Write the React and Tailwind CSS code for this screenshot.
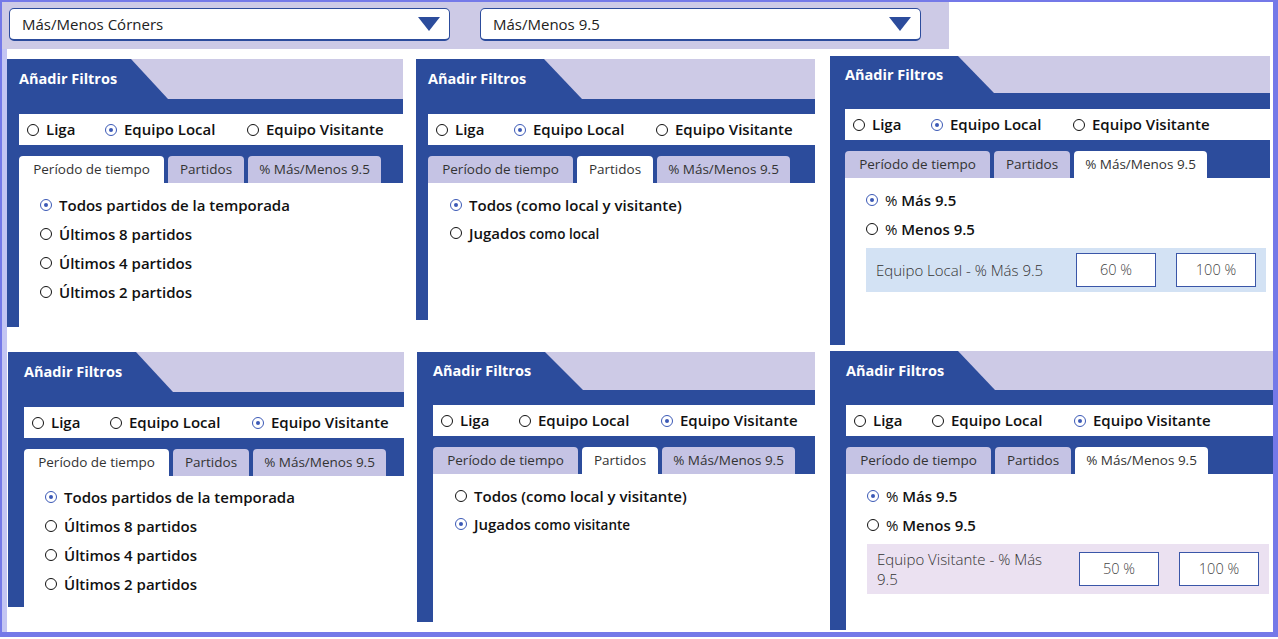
import React from "react";

const BLUE = "#2c4c9c";

function Radio({ on }) {
  return on ? (
    <span className="w-[12px] h-[12px] rounded-full border-[1.5px] border-[#3b59b6] flex items-center justify-center shrink-0">
      <span className="w-[4px] h-[4px] rounded-full bg-[#3b59b6]" />
    </span>
  ) : (
    <span className="w-[12px] h-[12px] rounded-full border-[1.5px] border-[#111] shrink-0" />
  );
}

function Header({ hCls, blueCls, padCls }) {
  return (
    <div className={`${hCls} bg-[#cdcae6] flex shrink-0`}>
      <div className={`${blueCls} h-full bg-[#2c4c9c] flex items-center ${padCls}`}>
        <span className="text-white font-bold text-[14.5px]">Añadir Filtros</span>
      </div>
    </div>
  );
}

function ScopeRow({ sel }) {
  const items = ["Liga", "Equipo Local", "Equipo Visitante"];
  const widths = ["w-[78px]", "w-[142px]", ""];
  return (
    <div className="h-[31px] bg-white flex items-center pl-[8px] shrink-0">
      {items.map((t, i) => (
        <div key={t} className={`${widths[i]} flex items-center gap-[7px]`}>
          <Radio on={sel === i} />
          <span className="text-[15px] font-semibold text-[#111]">{t}</span>
        </div>
      ))}
    </div>
  );
}

function Tabs({ active }) {
  const tabs = [
    ["Período de tiempo", "w-[145px]"],
    ["Partidos", "w-[76px]"],
    ["% Más/Menos 9.5", "w-[133px]"],
  ];
  return (
    <div className="mt-[11px] h-[27px] flex items-end gap-[4px] shrink-0">
      {tabs.map(([t, w], i) => (
        <div
          key={t}
          className={`${w} h-[27px] rounded-t-[4px] flex items-center justify-center text-[13.5px] text-[#333] ${
            active === i ? "bg-white" : "bg-[#c5c3e4]"
          }`}
        >
          {t}
        </div>
      ))}
    </div>
  );
}

function Item({ on, children }) {
  return (
    <div className="h-[20px] flex items-center gap-[7px]">
      <Radio on={on} />
      <span className="text-[15px] text-[#111] whitespace-nowrap">{children}</span>
    </div>
  );
}

function Periodo({ ptCls }) {
  return (
    <div className={`flex flex-col gap-[9px] pl-[21px] ${ptCls}`}>
      <Item on>
        <b className="font-semibold">Todos partidos de la temporada</b>
      </Item>
      <Item>
        <b className="font-semibold">Últimos 8 partidos</b>
      </Item>
      <Item>
        <b className="font-semibold">Últimos 4 partidos</b>
      </Item>
      <Item>
        <b className="font-semibold">Últimos 2 partidos</b>
      </Item>
    </div>
  );
}

function Partidos({ which }) {
  return (
    <div className="flex flex-col gap-[8px] pl-[22px] pt-[12px]">
      <Item on={false === which}>
        <b className="font-semibold">Todos (como local y visitante)</b>
      </Item>
      <Item on={which}>
        <b className="font-semibold">Jugados</b>
        <span className="text-[13.5px] font-semibold"> como {which ? "visitante" : "local"}</span>
      </Item>
    </div>
  );
}

function Pct({ label, v1, boxCls }) {
  return (
    <div className="flex flex-col pt-[12px] pl-[21px] pr-[4px]">
      <div className="flex flex-col gap-[9px]">
        <Item on>
          <span className="font-normal">% </span>
          <b className="font-semibold">Más 9.5</b>
        </Item>
        <Item>
          <span className="font-normal">% </span>
          <b className="font-semibold">Menos 9.5</b>
        </Item>
      </div>
      <div className={`mt-[9px] flex items-center pl-[10px] pr-[10px] gap-[20px] ${boxCls}`}>
        <div className="flex-1 text-[15px] font-light text-[#333] leading-[20px]">{label}</div>
        <div className="w-[80px] h-[34px] bg-white border border-[#3a56a8] flex items-center justify-center text-[14.5px] font-light text-[#444]">
          {v1}
        </div>
        <div className="w-[80px] h-[34px] bg-white border border-[#3a56a8] flex items-center justify-center text-[14.5px] font-light text-[#444]">
          100 %
        </div>
      </div>
    </div>
  );
}

function Panel({ outer, hCls, blueCls, padCls, bandCls, sel, tab, children }) {
  return (
    <div className={`${outer} bg-[#2c4c9c] flex flex-col shrink-0`}>
      <Header hCls={hCls} blueCls={blueCls} padCls={padCls} />
      <div className={`flex-1 flex flex-col ${padCls} ${bandCls}`}>
        <ScopeRow sel={sel} />
        <Tabs active={tab} />
        <div className="flex-1 bg-white">{children}</div>
      </div>
    </div>
  );
}

function Dropdown({ text }) {
  return (
    <div className="w-[441px] h-[33px] bg-white border border-[#2c4c9c] border-b-2 rounded-[5px] flex items-center justify-between pl-[12px] pr-[9px]">
      <span className="text-[15px] text-[#222]">{text}</span>
      <svg width="22" height="14" viewBox="0 0 22 14">
        <path d="M0 0 L22 0 L11 14 Z" fill={BLUE} />
      </svg>
    </div>
  );
}

export default function App() {
  return (
    <div className="w-[1278px] h-[639px] bg-white font-['Open_Sans','Noto_Sans',sans-serif]">
      <div className="h-[637px] border-l-[2px] border-t-[2px] border-r-[5px] border-b-[5px] border-[#7479e8] shadow-[inset_5px_0_0_#c3c5f3] flex flex-col">
        <div className="w-[947px] h-[47px] bg-[#cdcae6] flex items-start pt-[6px] pl-[7px] gap-[30px] shrink-0">
          <Dropdown text="Más/Menos Córners" />
          <Dropdown text="Más/Menos 9.5" />
        </div>

        <div className="h-[300px] flex items-start shrink-0">
          <Panel
            outer="ml-[5px] mt-[10px] w-[396px] h-[268px]"
            hCls="h-[40px]"
            blueCls="w-[161px] [clip-path:polygon(0_0,124px_0,100%_100%,0_100%)]"
            padCls="pl-[12px]"
            bandCls="pt-[15px]"
            sel={1}
            tab={0}
          >
            <Periodo ptCls="pt-[12px]" />
          </Panel>
          <Panel
            outer="ml-[13px] mt-[10px] w-[399px] h-[261px]"
            hCls="h-[40px]"
            blueCls="w-[166px] [clip-path:polygon(0_0,128px_0,100%_100%,0_100%)]"
            padCls="pl-[12px]"
            bandCls="pt-[15px]"
            sel={1}
            tab={1}
          >
            <Partidos which={false} />
          </Panel>
          <Panel
            outer="ml-[15px] mt-[7px] w-[440px] h-[289px]"
            hCls="h-[37px]"
            blueCls="w-[164px] [clip-path:polygon(0_0,128px_0,100%_100%,0_100%)]"
            padCls="pl-[15px]"
            bandCls="pt-[16px]"
            sel={1}
            tab={2}
          >
            <Pct label="Equipo Local - % Más 9.5" v1="60 %" boxCls="h-[44px] bg-[#d3e2f4]" />
          </Panel>
        </div>

        <div className="flex-1 flex items-start">
          <Panel
            outer="ml-[6px] mt-[3px] w-[396px] h-[255px]"
            hCls="h-[40px]"
            blueCls="w-[165px] [clip-path:polygon(0_0,128px_0,100%_100%,0_100%)]"
            padCls="pl-[16px]"
            bandCls="pt-[15px]"
            sel={2}
            tab={0}
          >
            <Periodo ptCls="pt-[11px]" />
          </Panel>
          <Panel
            outer="ml-[13px] mt-[3px] w-[398px] h-[270px]"
            hCls="h-[38px]"
            blueCls="w-[166px] [clip-path:polygon(0_0,128px_0,100%_100%,0_100%)]"
            padCls="pl-[16px]"
            bandCls="pt-[15px]"
            sel={2}
            tab={1}
          >
            <Partidos which={true} />
          </Panel>
          <Panel
            outer="ml-[15px] mt-[2px] w-[443px] h-[279px]"
            hCls="h-[39px]"
            blueCls="w-[165px] [clip-path:polygon(0_0,128px_0,100%_100%,0_100%)]"
            padCls="pl-[16px]"
            bandCls="pt-[15px]"
            sel={2}
            tab={2}
          >
            <Pct label="Equipo Visitante - % Más 9.5" v1="50 %" boxCls="h-[50px] bg-[#ebe1f1]" />
          </Panel>
        </div>
      </div>
    </div>
  );
}
